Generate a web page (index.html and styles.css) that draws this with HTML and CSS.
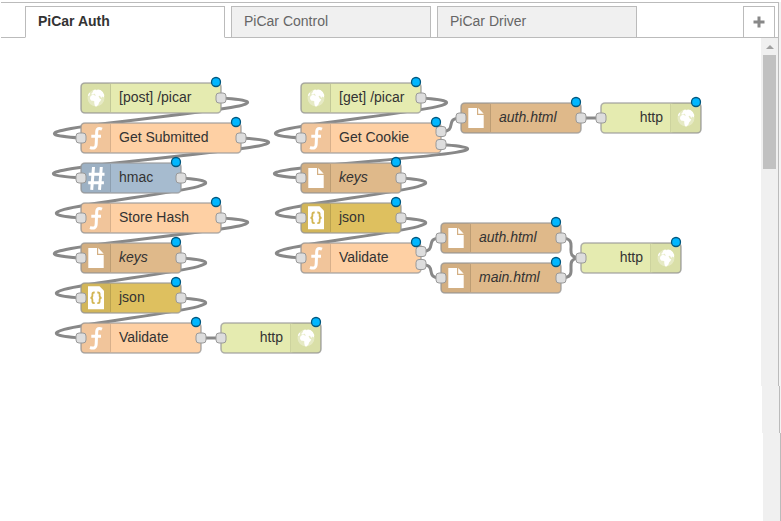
FILE: index.html
```html
<!DOCTYPE html>
<html lang="en">
<head>
<meta charset="utf-8">
<title>PiCar flows</title>
<link rel="stylesheet" href="styles.css">
</head>
<body>
<div class="workspace">
  <nav class="tabs">
    <a class="tab active">PiCar Auth</a>
    <a class="tab">PiCar Control</a>
    <a class="tab">PiCar Driver</a>
    <a class="add"><svg width="12" height="12"><path d="M4.500 0.500h3v4h4v3h-4v4h-3v-4h-4v-3h4z"/></svg></a>
  </nav>
  <main class="chart">
    <svg class="flow" width="761" height="483" viewBox="0 38 761 483">
      <defs>
        <g id="function"><path class="stroke" d="M21 6.200C18 4.800 15.800 5.200 15.700 9L15.200 21C15 25.200 12.500 25.800 9 24.500M10.300 13.200h9.700"/></g>
        <g id="file"><path class="solid" d="M7.300 5H16v7h6.700v13H7.300zM17.200 5l5.500 5.800h-5.500z"/></g>
        <g id="hash"><path class="stroke" d="M12.500 4L10.700 26.800M20.300 4L18.500 26.800M7.800 11.300h15.700M7.200 19.700h15.700"/></g>
        <g id="json"><path class="solid" d="M7 3.200h11.500l4.500 4.500v18.500H7z"/><path class="brace" d="M13.700 9.500h-.7q-1.600 0-1.600 1.600v1.700q0 2-2 2 2 0 2 2v1.700q0 1.600 1.600 1.600h.7M16.300 9.500h.7q1.600 0 1.600 1.600v1.700q0 2 2 2-2 0-2 2v1.700q0 1.600-1.600 1.600h-.7"/></g>
        <g id="globe"><circle class="sea" cx="15" cy="15" r="8.500"/><path class="solid" d="M10.500 10.500l1-1 .8-2 1.700-1 1.500.8 1.500-.8 2.500.6 2.300 2 1.500 3-.5 2.500-1.500-1-1 1.500-1.300-2.300-1.500.2 1.500 3h1.300l-.8 2-1.500 1.500-.5 2-2 2-1.500-.3-.8-3.200.2-1.500-1.200-.8h-1.700l-1.500-1.700.2-2.200 1.800-1.800 1.700-.2 1 .8 1.500-.2-1.200-1-.8-1-1 1-1.700.2z"/><path class="solid" d="M6.800 12.500l1.500-3 .8 1-1 2.500z"/></g>
      </defs>
      <g id="wires"></g>
      <g id="nodes"></g>
    </svg>
    <div class="scroll">
      <div class="track first"><i class="up"></i><i class="thumb"></i></div>
      <div class="track second"></div>
      <div class="track third"></div>
    </div>
  </main>
</div>
<script src="flow.js"></script>
</body>
</html>
```
FILE: styles.css
```css
body {
  margin: 0;
  background: #fff;
  font-family: "Liberation Sans", Arial, sans-serif;
  font-size: 14px;
  color: #333;
}
.workspace {
  height: 521px;
  padding: 2px 0 0 1px;
  box-sizing: border-box;
  overflow: hidden;
}
.tabs {
  display: flex;
  align-items: flex-end;
  gap: 6px;
  height: 36px;
  width: 778px;
  box-sizing: border-box;
  padding: 0 3px 0 24px;
  border-top: 1px solid #bbb;
  border-right: 1px solid #bbb;
  background: linear-gradient(#bbb, #bbb) bottom / 100% 1px no-repeat;
  box-shadow: 3px 0 #f3f3f3;
}
.tab {
  box-sizing: border-box;
  width: 200px;
  height: 32px;
  padding-left: 12px;
  border: 1px solid #bbb;
  background: #f0f0f0;
  color: #666;
  line-height: 29px;
}
.tab.active {
  background: #fff;
  border-bottom-color: #fff;
  color: #333;
  font-weight: bold;
}
.add {
  display: flex;
  align-items: center;
  justify-content: center;
  box-sizing: border-box;
  width: 32px;
  height: 32px;
  margin-left: auto;
  border: 1px solid #bbb;
}
.add svg { fill: #888; }
.chart { display: flex; height: 483px; margin-left: -1px; }
.flow { flex: none; display: block; }
.scroll { display: flex; flex-direction: column; width: 20px; overflow: hidden; }
.track {
  box-sizing: border-box;
  width: 18px;
  flex: none;
  background: #f0f0f0;
  border-right: 1px solid #bbb;
  box-shadow: 3px 0 #f3f3f3;
}
.first { height: 348px; display: flex; flex-direction: column; align-items: center; }
.second { height: 47px; margin-left: 1px; }
.third { height: 88px; margin-left: 2px; }
.up {
  margin: 7px 0 6px;
  border: 4px solid transparent;
  border-top: 0;
  border-bottom-color: #a0a0a0;
}
.thumb { width: 13px; height: 114px; background: #c1c1c1; }
.wire { fill: none; stroke: #888; stroke-width: 3; }
.box { stroke: #999; stroke-opacity: .75; stroke-width: 1.6; }
.shade { fill: #000; fill-opacity: .05; }
.divider { stroke: #000; stroke-opacity: .1; }
.port { fill: #ddd; stroke: #999; stroke-width: 1; }
.changed { fill: #00b7ff; stroke: #00577f; stroke-width: 1.3; }
.label { fill: #333; font-size: 14px; }
.italic { font-style: italic; }
.end { text-anchor: end; }
.solid { fill: #fff; }
.sea { fill: #fff; fill-opacity: .35; }
.stroke { fill: none; stroke: #fff; stroke-width: 3; }
.brace { fill: none; stroke: #d2b552; stroke-width: 1.8; }
```
FILE: flow.js
```js
const colors = {
  globe: '#e5ebb0', function: '#fed0a4', hash: '#a6bbcf',
  file: '#dfb98a', json: '#dec05f'
};

// id, x, y, width, icon, label, output count, has input
const nodes = [
  ['p', 81, 83, 140, 'globe', '[post] /picar', 1, 0],
  ['gs', 81, 123, 160, 'function', 'Get Submitted', 1, 1],
  ['hm', 81, 163, 100, 'hash', 'hmac', 1, 1],
  ['sh', 81, 203, 140, 'function', 'Store Hash', 1, 1],
  ['k1', 81, 243, 100, 'file', 'keys', 1, 1],
  ['j1', 81, 283, 100, 'json', 'json', 1, 1],
  ['v1', 81, 323, 120, 'function', 'Validate', 1, 1],
  ['h1', 221, 323, 100, 'globe', 'http', 0, 1],
  ['g', 301, 83, 120, 'globe', '[get] /picar', 1, 0],
  ['gc', 301, 123, 140, 'function', 'Get Cookie', 2, 1],
  ['k2', 301, 163, 100, 'file', 'keys', 1, 1],
  ['j2', 301, 203, 100, 'json', 'json', 1, 1],
  ['v2', 301, 243, 120, 'function', 'Validate', 2, 1],
  ['a1', 461, 103, 120, 'file', 'auth.html', 1, 1],
  ['h2', 601, 103, 100, 'globe', 'http', 0, 1],
  ['a2', 441, 223, 120, 'file', 'auth.html', 1, 1],
  ['m', 441, 263, 120, 'file', 'main.html', 1, 1],
  ['h3', 581, 243, 100, 'globe', 'http', 0, 1]
];

const links = [
  ['p', 0, 'gs'], ['gs', 0, 'hm'], ['hm', 0, 'sh'], ['sh', 0, 'k1'],
  ['k1', 0, 'j1'], ['j1', 0, 'v1'], ['v1', 0, 'h1'],
  ['g', 0, 'gc'], ['gc', 0, 'a1'], ['gc', 1, 'k2'], ['a1', 0, 'h2'],
  ['k2', 0, 'j2'], ['j2', 0, 'v2'], ['v2', 0, 'a2'], ['v2', 1, 'm'],
  ['a2', 0, 'h3'], ['m', 0, 'h3']
];

const byId = Object.fromEntries(nodes.map(n => [n[0], n]));
const outY = (n, i) => n[2] + 15 + (i - (n[6] - 1) / 2) * 13;

function wire([from, port, to]) {
  const a = byId[from], b = byId[to];
  const x1 = a[1] + a[3], y1 = outY(a, port), x2 = b[1], y2 = b[2] + 15;
  const dx = x2 - x1, dy = y2 - y1, delta = Math.hypot(dx, dy);
  let scale = delta < 100 ? 0.75 * delta / 100 : 0.75, lift = 0;
  if (dx < 0) {
    scale += 2 * Math.min(500, -dx) / 500;
    if (Math.abs(dy) < 90) {
      lift = Math.sign(dy) * 0.5 * (90 - Math.abs(dy)) / 90 * Math.min(100, -dx) / 100;
    }
  }
  return `<path class="wire" d="M${x1} ${y1}C${x1 + 100 * scale} ${y1 + lift * 30} ${x2 - 100 * scale} ${y2 - lift * 30} ${x2} ${y2}"/>`;
}

const portAt = (x, y) => `<rect class="port" x="${x - 5}" y="${y - 5}" width="10" height="10" rx="3"/>`;

function node(n) {
  const [, x, y, w, icon, label, outs, input] = n;
  const right = label === 'http';
  const ix = right ? x + w - 30 : x;
  const lx = right ? ix : x + 30;
  const cls = 'label' + (icon === 'file' ? ' italic' : '') + (right ? ' end' : '');
  let s = `<rect class="box" x="${x}" y="${y}" width="${w}" height="30" rx="4" fill="${colors[icon]}"/>
    <rect class="shade" x="${ix}" y="${y}" width="30" height="30" rx="3"/>
    <path class="divider" d="M${lx - 0.5} ${y + 1}v28"/>
    <use href="#${icon}" x="${ix}" y="${y}"/>
    <text class="${cls}" x="${right ? x + w - 38 : x + 38}" y="${y + 19}">${label}</text>`;
  if (input) s += portAt(x, y + 15);
  for (let i = 0; i < outs; i++) s += portAt(x + w, outY(n, i));
  return s + `<circle class="changed" cx="${x + w - 5}" cy="${y - 1}" r="4.500"/>`;
}

document.getElementById('wires').innerHTML = links.map(wire).join('');
document.getElementById('nodes').innerHTML = nodes.map(node).join('');
```
